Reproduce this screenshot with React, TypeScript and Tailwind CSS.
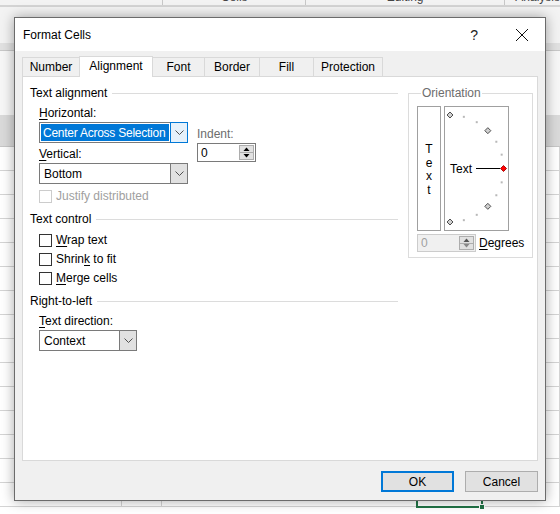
import React from 'react';

const Chevron: React.FC = () => (
  <svg width="9" height="5" viewBox="0 0 9 5">
    <path d="M0.5 0.5L4.5 4.5L8.5 0.5" fill="none" stroke="#505050" strokeWidth="1" />
  </svg>
);

const Tri: React.FC<{ up?: boolean; color?: string }> = ({ up, color = '#000' }) => (
  <svg width="7" height="4" viewBox="0 0 7 4">
    <path d={up ? 'M0.5 4L3.5 0.5L6.5 4Z' : 'M0.5 0L3.5 3.5L6.5 0Z'} fill={color} />
  </svg>
);

const Label: React.FC<{ children: React.ReactNode; className?: string }> = ({ children, className = '' }) => (
  <div className={`h-[16px] whitespace-nowrap leading-[16px] ${className}`}>{children}</div>
);

const SectionHeader: React.FC<{ title: string; className?: string }> = ({ title, className = '' }) => (
  <div className={`flex h-[16px] items-center ${className}`}>
    <span className="leading-[16px]">{title}</span>
    <div className="ml-[5px] h-px flex-1 bg-[#dcdcdc]" />
  </div>
);

const Select: React.FC<{ value: string; width: string; focused?: boolean; className?: string }> = ({
  value,
  width,
  focused,
  className = '',
}) => (
  <div className={`flex h-[21px] border border-[#7a7a7a] bg-white ${width} ${className}`}>
    <div className="flex min-w-0 flex-1 p-px">
      {focused ? (
        <span className="flex min-w-0 flex-1 items-center overflow-hidden whitespace-nowrap bg-[#0078d7] pl-[2px] tracking-[-0.25px] text-white">
          {value}
        </span>
      ) : (
        <span className="flex flex-1 items-center whitespace-nowrap pl-[3px]">{value}</span>
      )}
    </div>
    {focused ? (
      <div className="-my-px -mr-px flex w-[18px] shrink-0 items-center justify-center border border-[#0078d7] bg-[#e5f1fb]">
        <Chevron />
      </div>
    ) : (
      <div className="flex w-[17px] shrink-0 items-center justify-center border-l border-[#7a7a7a] bg-[#e1e1e1]">
        <Chevron />
      </div>
    )}
  </div>
);

const Spin: React.FC<{ disabled?: boolean; className?: string }> = ({ disabled, className = '' }) => (
  <div
    className={`flex w-[59px] ${
      disabled ? 'h-[18px] border border-[#cccccc] bg-[#f0f0f0] text-[#a0a0a0]' : 'h-[19px] border border-[#7a7a7a] bg-white'
    } ${className}`}
  >
    <span className="flex flex-1 items-center pl-[3px]">0</span>
    <div className="flex w-[17px] flex-col p-px">
      <div className="flex flex-1 items-center justify-center border border-[#adadad] bg-[#e1e1e1]">
        <Tri up color={disabled ? '#555' : '#000'} />
      </div>
      <div className="flex flex-1 items-center justify-center border border-t-0 border-[#adadad] bg-[#e1e1e1]">
        <Tri color={disabled ? '#888' : '#000'} />
      </div>
    </div>
  </div>
);

const Checkbox: React.FC<{ children: React.ReactNode; disabled?: boolean; className?: string }> = ({
  children,
  disabled,
  className = '',
}) => (
  <div className={`ml-[9px] flex h-[16px] items-center ${className}`}>
    <div
      className={`h-[13px] w-[13px] border bg-white ${disabled ? 'border-[#cccccc]' : 'border-[#333333]'}`}
    />
    <span className={`ml-[4px] leading-[16px] ${disabled ? 'text-[#a0a0a0]' : ''}`}>{children}</span>
  </div>
);

const OrientationDial: React.FC = () => {
  const cx = 5;
  const cy = 61.5;
  const r = 53.5;
  const angles = [90, 75, 60, 45, 30, 15, 0, -15, -30, -45, -60, -75, -90];
  return (
    <svg width="63" height="123" viewBox="0 0 63 123">
      {angles.map((a) => {
        const x = cx + r * Math.cos((a * Math.PI) / 180);
        const y = cy - r * Math.sin((a * Math.PI) / 180);
        if (a % 45 !== 0) {
          return <rect key={a} x={x - 1} y={y - 1} width="2" height="2" fill="#b8b8b8" />;
        }
        const red = a === 0;
        return (
          <polygon
            key={a}
            points={`${x},${y - 3} ${x + 3},${y} ${x},${y + 3} ${x - 3},${y}`}
            fill={red ? '#ff0000' : '#d0d0d0'}
            stroke={red ? '#a00000' : '#3c3c3c'}
            strokeWidth="0.9"
          />
        );
      })}
      <line x1="31" y1="61.5" x2="55" y2="61.5" stroke="#000" strokeWidth="1" />
      <text x="5" y="66" fontSize="12" fill="#000" fontFamily="'Liberation Sans', Arial, sans-serif">
        Text
      </text>
    </svg>
  );
};

const tabs = [
  { name: 'Number', w: 'w-[58px]' },
  { name: 'Alignment', w: 'w-[74px]' },
  { name: 'Font', w: 'w-[53px]' },
  { name: 'Border', w: 'w-[56px]' },
  { name: 'Fill', w: 'w-[55px]' },
  { name: 'Protection', w: 'w-[70px]' },
];

const gridCells = ['w-[122px]', 'w-[40px]', 'w-[255px]', 'w-[65px]', 'w-[78px]'];

const App: React.FC = () => {
  return (
    <div className="relative h-[514px] w-[560px] overflow-hidden bg-white font-['Liberation_Sans',Arial,sans-serif] text-[12px] text-black">
      {/* excel behind the dialog */}
      <div className="flex h-[5px] overflow-hidden bg-[#f3f3f3] text-[12px] text-[#444]">
        <div className="w-[164px] border-r border-[#c8c8c8]" />
        <div className="flex w-[143px] justify-center border-r border-[#c8c8c8]">
          <span className="-mt-[9px] leading-[12px]">Cells</span>
        </div>
        <div className="flex w-[200px] justify-center border-r border-[#c8c8c8]">
          <span className="-mt-[9px] leading-[12px]">Editing</span>
        </div>
        <div className="pl-[10px]">
          <span className="-mt-[9px] block leading-[12px]">Analysis</span>
        </div>
      </div>
      <div className="h-[2px] bg-[#d4d4d4]" />
      <div className="h-[36px] bg-[#f3f3f3]" />
      <div className="h-[8px] border-b border-[#c8c8c8] bg-[#e1e1e1]" />
      <div className="h-[64px] bg-[#f7f7f7]" />
      <div className="h-[32px] border-b border-[#c6c6c6] bg-[#dadada]" />
      {Array.from({ length: 15 }).map((_, i) => (
        <div key={i} className="flex h-[24px] border-b border-[#d4d4d4]">
          {gridCells.map((w, j) => (
            <div key={j} className={`${w} border-r border-[#d4d4d4]`} />
          ))}
        </div>
      ))}
      {/* selected cell */}
      <div className="absolute left-[416px] top-[420px] h-[88px] w-[67px] border-2 border-[#217346]" />
      <div className="absolute left-[479px] top-[504px] h-[6px] w-[6px] border border-white bg-[#217346]" />

      {/* dialog */}
      <div className="absolute left-[14px] top-[17px] flex h-[484px] w-[532px] flex-col border border-[#6b6b6b] bg-[#f0f0f0] shadow-[0_0_12px_rgba(0,0,0,0.35)]">
        <div className="flex h-[33px] items-center bg-white pl-[8px]">
          <span className="flex-1">Format Cells</span>
          <span className="mr-[37px] text-[14px] leading-none text-[#222]">?</span>
          <svg width="14" height="14" viewBox="0 0 14 14" className="mr-[16px]">
            <path d="M1 1L13 13M13 1L1 13" stroke="#111" strokeWidth="1" />
          </svg>
        </div>

        <div className="flex flex-1 flex-col px-[7px] pb-[7px] pt-[5px]">
          <div className="flex h-[20px] items-end">
            {tabs.map((t, i) =>
              t.name === 'Alignment' ? (
                <div
                  key={t.name}
                  className={`relative z-10 -mb-px -ml-px flex h-[21px] items-center justify-center border border-b-0 border-[#d9d9d9] bg-white pb-[2px] ${t.w}`}
                >
                  {t.name}
                </div>
              ) : (
                <div
                  key={t.name}
                  className={`flex h-[19px] items-center justify-center border border-b-0 border-[#d9d9d9] bg-[#f0f0f0] ${
                    i === 0 ? '' : '-ml-px'
                  } ${t.w}`}
                >
                  {t.name}
                </div>
              )
            )}
          </div>

          <div className="flex h-[385px] border border-[#d9d9d9] bg-white">
            {/* left column */}
            <div className="w-[375px] pl-[7px] pt-[8px]">
              <SectionHeader title="Text alignment" />
              <div className="ml-[9px] mt-[4px] flex">
                <div className="w-[149px]">
                  <Label>
                    <u className="underline-offset-2">H</u>orizontal:
                  </Label>
                  <Select value="Center Across Selection" width="w-[149px]" focused className="mt-[1px]" />
                  <Label className="mt-[3px]">
                    <u className="underline-offset-2">V</u>ertical:
                  </Label>
                  <Select value="Bottom" width="w-[149px]" className="mt-[1px]" />
                </div>
                <div className="ml-[9px] pt-[21px]">
                  <Label className="text-[#6d6d6d]">Indent:</Label>
                  <Spin className="mt-[1px]" />
                </div>
              </div>
              <Checkbox disabled className="mt-[4px]">
                Justify distributed
              </Checkbox>

              <SectionHeader title="Text control" className="mt-[7px]" />
              <Checkbox className="mt-[5px]">
                <u className="underline-offset-2">W</u>rap text
              </Checkbox>
              <Checkbox className="mt-[3px]">
                Shrin<u className="underline-offset-2">k</u> to fit
              </Checkbox>
              <Checkbox className="mt-[3px]">
                <u className="underline-offset-2">M</u>erge cells
              </Checkbox>

              <SectionHeader title="Right-to-left" className="mt-[7px]" />
              <Label className="ml-[9px] mt-[4px]">
                <u className="underline-offset-2">T</u>ext direction:
              </Label>
              <Select value="Context" width="w-[98px]" className="ml-[9px] mt-[1px]" />
            </div>

            {/* orientation */}
            <div className="ml-[10px] pt-[8px]">
              <fieldset className="w-[121px] border border-[#dcdcdc] px-[8px] pb-[5px]">
                <legend className="ml-[4px] px-px leading-[16px] text-[#6d6d6d]">Orientation</legend>
                <div className="mt-[5px] flex gap-[3px]">
                  <div className="flex h-[125px] w-[24px] flex-col items-center justify-center border border-[#a0a0a0] pt-[3px] leading-[13.5px]">
                    <span>T</span>
                    <span>e</span>
                    <span>x</span>
                    <span>t</span>
                  </div>
                  <div className="h-[125px] w-[65px] border border-[#a0a0a0]">
                    <OrientationDial />
                  </div>
                </div>
                <div className="mt-[3px] flex items-center">
                  <Spin disabled />
                  <span className="ml-[3px]">
                    <u className="underline-offset-2">D</u>egrees
                  </span>
                </div>
              </fieldset>
            </div>
          </div>

          <div className="mt-[10px] flex justify-end gap-[11px]">
            <button className="h-[21px] w-[73px] border-2 border-[#0078d7] bg-[#e1e1e1]">OK</button>
            <button className="h-[21px] w-[73px] border border-[#adadad] bg-[#e1e1e1]">Cancel</button>
          </div>
        </div>
      </div>
    </div>
  );
};

export default App;
